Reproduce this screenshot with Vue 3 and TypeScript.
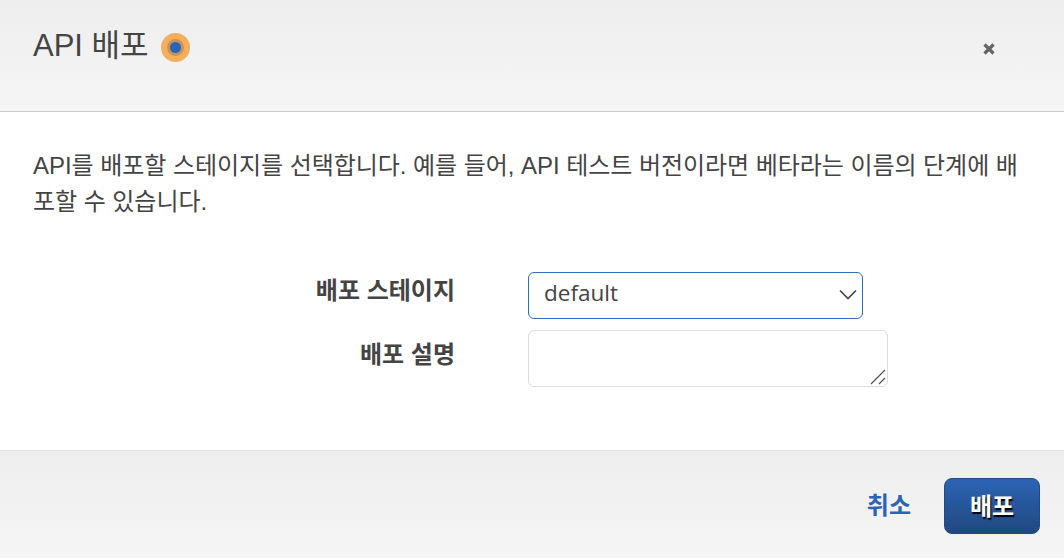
<script setup lang="ts">
import { ref } from 'vue'
const stage = ref<string>('default')
const description = ref<string>('')
</script>

<template>
  <div class="modal">
    <header class="head">
      <h1 class="title">API 배포</h1>
      <span class="dot"><span class="dot-mid"><span class="dot-core"></span></span></span>
      <button class="close" aria-label="닫기">
        <svg width="14" height="14" viewBox="0 0 14 14"><path d="M2.5 2.5l9 9M11.5 2.5l-9 9" stroke="#666" stroke-width="3.2" fill="none" /></svg>
      </button>
    </header>
    <main class="body">
      <p class="intro">API를 배포할 스테이지를 선택합니다. 예를 들어, API 테스트 버전이라면 베타라는 이름의 단계에 배포할 수 있습니다.</p>
      <div class="form">
        <label class="label l1">배포 스테이지</label>
        <div class="select-wrap">
          <select v-model="stage" class="select"><option value="default">default</option></select>
          <svg class="chev" width="18" height="11" viewBox="0 0 18 11"><path d="M1 1.5l8 8 8-8" stroke="#444" stroke-width="1.6" fill="none" /></svg>
        </div>
        <label class="label l2">배포 설명</label>
        <div class="area-wrap">
          <textarea v-model="description" class="area"></textarea>
          <svg class="grip" width="16" height="16" viewBox="0 0 16 16"><path d="M1 15L15 1M9 15l6-6" stroke="#555" stroke-width="1.3" fill="none" /></svg>
        </div>
      </div>
    </main>
    <footer class="foot">
      <a class="cancel">취소</a>
      <button class="deploy">배포</button>
    </footer>
  </div>
</template>

<style>
html, body { margin: 0; background: #fff; }
</style>

<style scoped>
.modal {
  width: 1064px;
  height: 558px;
  display: flex;
  flex-direction: column;
  font-family: "Liberation Sans", "Noto Sans CJK KR", sans-serif;
  color: #444;
  overflow: hidden;
}
.head {
  height: 111px;
  box-sizing: content-box;
  border-bottom: 1px solid #ccc;
  background: linear-gradient(#eee, #f5f5f5);
  display: flex;
  align-items: flex-start;
  padding: 0 33px;
  position: relative;
}
.title {
  margin: 26px 0 0;
  font-size: 31px;
  line-height: 40px;
  font-weight: 400;
  color: #444;
}
.dot {
  margin: 33px 0 0 12px;
  width: 29px;
  height: 29px;
  border-radius: 50%;
  background: #f4ae5c;
  display: flex;
  align-items: center;
  justify-content: center;
}
.dot-mid {
  width: 17px;
  height: 17px;
  border-radius: 50%;
  background: #c6935a;
  display: flex;
  align-items: center;
  justify-content: center;
}
.dot-core {
  width: 11px;
  height: 11px;
  border-radius: 50%;
  background: #2b63b9;
}
.close {
  position: absolute;
  left: 982px;
  top: 42px;
  width: 14px;
  height: 14px;
  padding: 0;
  border: 0;
  background: none;
  display: block;
}
.close svg { display: block; }
.body {
  height: 338px;
  background: #fff;
  padding: 36px 33px 0;
  box-sizing: border-box;
}
.intro {
  margin: 0;
  width: 990px;
  font-size: 24px;
  line-height: 36px;
  letter-spacing: -0.05px;
  color: #444;
  word-break: break-all;
}
.form {
  margin-top: 52px;
  display: grid;
  grid-template-columns: 422px auto;
  column-gap: 73px;
  justify-content: start;
}
.label {
  font-size: 24px;
  font-weight: 700;
  line-height: 36px;
  text-align: right;
  color: #444;
}
.l1 { margin-top: 1px; }
.l2 { margin-top: 7px; }
.select-wrap {
  position: relative;
  width: 335px;
  height: 47px;
  margin-bottom: 11px;
}
.select {
  appearance: none;
  width: 100%;
  height: 100%;
  box-sizing: border-box;
  border: 1px solid #2a70ba;
  border-radius: 6px;
  background: #fff;
  padding: 0 15px 6px;
  font-family: "Open Sans", "Noto Sans", sans-serif;
  font-size: 22.5px;
  color: #444;
  outline: none;
}
.chev {
  position: absolute;
  right: 6px;
  top: 17px;
  pointer-events: none;
}
.area-wrap {
  position: relative;
  width: 360px;
  height: 57px;
}
.area {
  display: block;
  width: 100%;
  height: 100%;
  box-sizing: border-box;
  border: 1px solid #ddd;
  border-radius: 6px;
  resize: none;
  background: #fff;
  outline: none;
}
.grip {
  position: absolute;
  right: 2px;
  bottom: 2px;
  pointer-events: none;
}
.foot {
  flex: 1;
  border-top: 1px solid #e5e5e5;
  background: linear-gradient(#eee, #f5f5f5);
  display: flex;
  justify-content: flex-end;
  align-items: flex-start;
  padding: 27px 24px 0 0;
}
.cancel {
  font-size: 24px;
  font-weight: 700;
  line-height: 56px;
  color: #2b63b9;
  margin-right: 33px;
}
.deploy {
  width: 96px;
  height: 56px;
  border: 1px solid #1f4a85;
  border-radius: 8px;
  background: linear-gradient(#2c64b4, #20487f);
  color: #fff;
  font-family: inherit;
  font-size: 24px;
  font-weight: 700;
  text-shadow: 1px 2px 1px #000;
  padding: 0 0 3px;
}
</style>
